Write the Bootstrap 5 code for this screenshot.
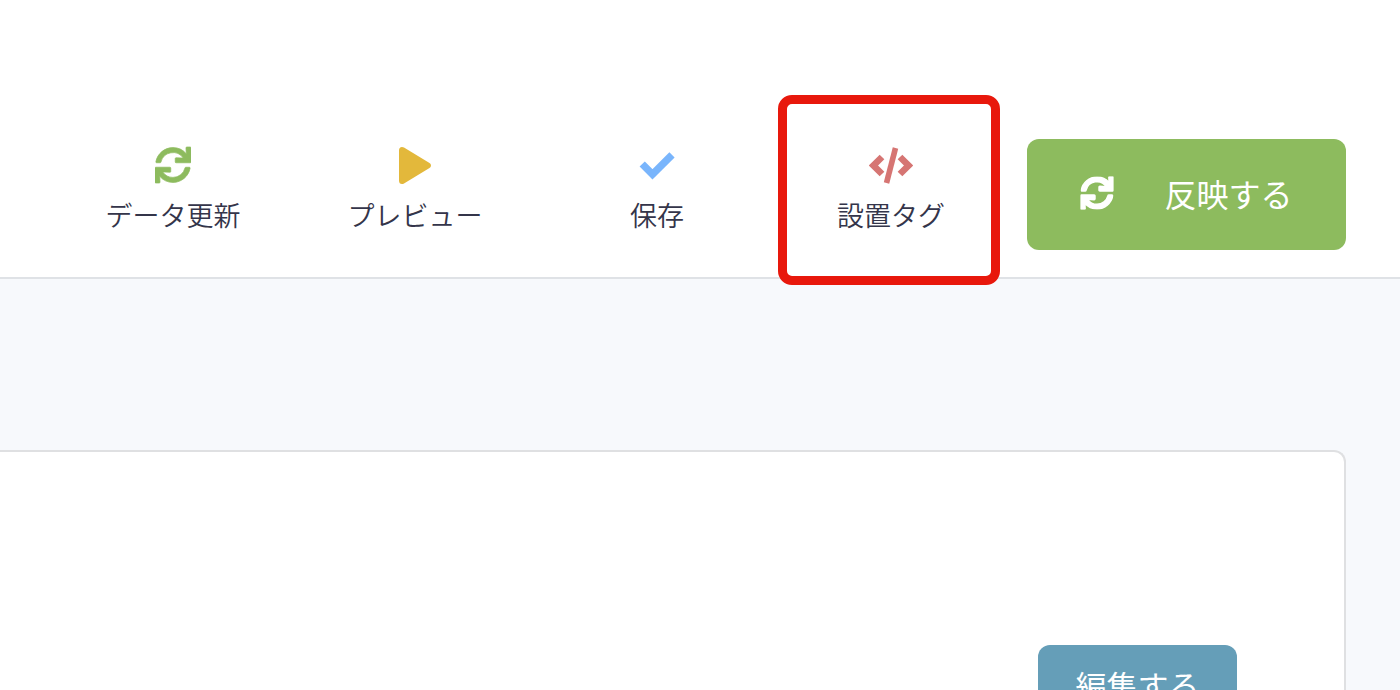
<!DOCTYPE html>
<html lang="ja">
<head>
<meta charset="utf-8">
<meta name="viewport" content="width=device-width, initial-scale=1">
<title>設置タグ</title>
<link href="https://cdn.jsdelivr.net/npm/bootstrap@5.3.0/dist/css/bootstrap.min.css" rel="stylesheet">
<style>
  body { background: #f7f9fc; color: #34354a; font-family: "Noto Sans CJK JP", sans-serif; }
  .toolbar { height: 279px; padding: 95px 54px 0 0; border-bottom: 2px solid #dfe2e6; }
  .tool { width: 242px; height: 190px; padding: 50px 0 0; border: 0; background: none; color: inherit; font-size: 27px; line-height: 40px; font-weight: 350; }
  .tool svg { height: 40px; margin-bottom: 10px; }
  .tool-marked { width: 222px; margin-right: 27px; padding-left: 4px; }
  .marker { inset: 0; border: 9px solid #e8180c; border-radius: 14px; pointer-events: none; }
  .btn-main { width: 319px; height: 111px; margin-top: 44px; padding: 0 0 4px; gap: 50px; border: 0; border-radius: 12px; background: #8dbb5e; color: #fff; font-size: 32px; }
  .panel { margin-top: 171px; margin-right: 54px; min-height: 0; padding: 193px 107px 0 0; background: #fff; border: 2px solid #dfe0e2; border-width: 2px 2px 0 0; border-radius: 0 12px 0 0; }
  .btn-edit { width: 199px; height: 80px; padding: 0; border: 0; border-radius: 12px; background: #659eb8; color: #fff; font-size: 31px; line-height: 40px; }
</style>
</head>
<body class="vh-100 overflow-hidden d-flex flex-column">
<svg class="d-none" aria-hidden="true">
  <symbol id="sync" viewBox="0 0 512 512"><path d="M440.65 12.57l4 82.77A247.16 247.16 0 0 0 255.83 8C134.73 8 33.91 94.92 12.29 209.82A12 12 0 0 0 24.09 224h49.05a12 12 0 0 0 11.67-9.26 175.91 175.91 0 0 1 317-56.94l-101.46-4.86a12 12 0 0 0-12.57 12v47.41a12 12 0 0 0 12 12H500a12 12 0 0 0 12-12V12a12 12 0 0 0-12-12h-47.37a12 12 0 0 0-11.98 12.57zM255.83 432a175.61 175.61 0 0 1-146-77.8l101.8 4.87a12 12 0 0 0 12.57-12v-47.4a12 12 0 0 0-12-12H12a12 12 0 0 0-12 12V500a12 12 0 0 0 12 12h47.35a12 12 0 0 0 12-12.6l-4.15-82.57A247.17 247.17 0 0 0 255.83 504c121.11 0 221.93-86.92 243.55-201.82a12 12 0 0 0-11.8-14.18h-49.05a12 12 0 0 0-11.67 9.26A175.86 175.86 0 0 1 255.83 432z"/></symbol>
</svg>
<header class="toolbar flex-shrink-0 d-flex justify-content-end align-items-start bg-white">
  <button type="button" class="tool d-flex flex-column align-items-center"><svg width="36" fill="#8dbb5e" stroke="#8dbb5e" stroke-width="10" aria-hidden="true"><use href="#sync"/></svg>データ更新</button>
  <button type="button" class="tool d-flex flex-column align-items-center"><svg width="32" viewBox="0 0 32 40" fill="#e3b83b" aria-hidden="true"><path d="M0 5.500Q0 2 3 2 4 2 5 2.600L30.500 18Q32 18.800 32 20.500T30.500 23L5 38.400Q4 39 3 39 0 39 0 35.500Z"/></svg>プレビュー</button>
  <button type="button" class="tool d-flex flex-column align-items-center"><svg width="36" viewBox="0 0 36 40" fill="none" stroke="#79b5fc" aria-hidden="true"><path d="M3.200 19L13.500 29.300 33 9.800" stroke-width="7.400"/></svg>保存</button>
  <button type="button" class="tool tool-marked position-relative d-flex flex-column align-items-center"><span class="marker position-absolute"></span><svg width="44" viewBox="0 0 44 40" fill="none" stroke="#d67573" aria-hidden="true"><path d="M13 12L4.500 20.500 13 29M31 12L39.500 20.500 31 29" stroke-width="6.600"/><path d="M26.500 3L17.500 38" stroke-width="5.600"/></svg>設置タグ</button>
  <button type="button" class="btn-main d-flex justify-content-center align-items-center"><svg width="34" height="34" viewBox="-8 -8 528 528" fill="#fff" stroke="#fff" stroke-width="24" aria-hidden="true"><use href="#sync" width="512" height="512"/></svg>反映する</button>
</header>
<main class="panel flex-fill overflow-hidden d-flex justify-content-end align-items-start">
  <button type="button" class="btn-edit">編集する</button>
</main>
<script src="https://cdn.jsdelivr.net/npm/bootstrap@5.3.0/dist/js/bootstrap.bundle.min.js"></script>
</body>
</html>
